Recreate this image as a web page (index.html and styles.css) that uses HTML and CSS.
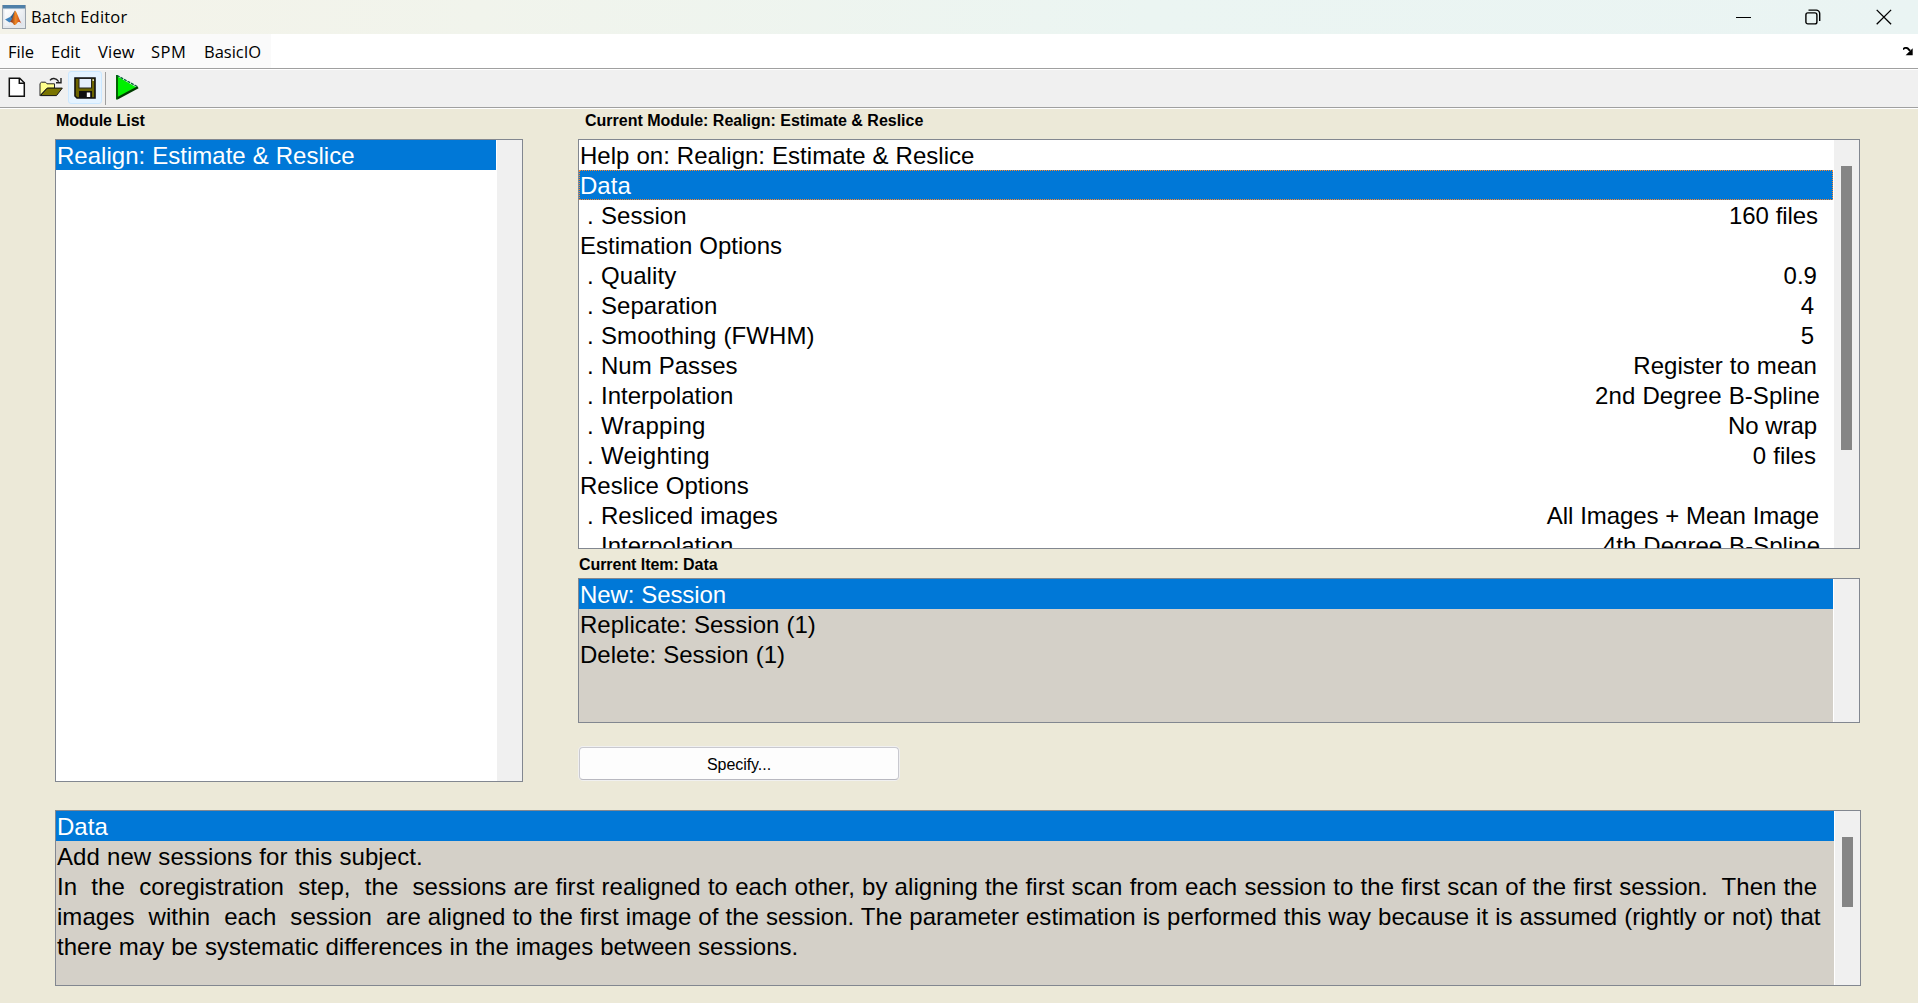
FILE: index.html
```html
<!DOCTYPE html>
<html lang="en">
<head>
<meta charset="utf-8">
<title>Batch Editor</title>
<link rel="stylesheet" href="styles.css">
</head>
<body>
<header class="titlebar">
  <svg class="app-icon" width="24" height="24" viewBox="0 0 24 24">
    <defs>
      <linearGradient id="peak" x1="0" y1="0" x2="1" y2="0"><stop offset="0" stop-color="#7a2418"/><stop offset=".5" stop-color="#f08a24"/><stop offset="1" stop-color="#b5301a"/></linearGradient>
      <linearGradient id="face" x1="0" y1="0" x2="1" y2="1"><stop offset="0" stop-color="#ffffff"/><stop offset="1" stop-color="#dde3ea"/></linearGradient>
    </defs>
    <rect x=".5" y=".5" width="23" height="23" fill="#e4e8ec" stroke="#9aa3ac"/>
    <rect x="1" y="0" width="22" height="3.5" fill="#4f80a8"/>
    <rect x="2.5" y="4.500" width="19" height="16.500" fill="url(#face)"/>
    <path d="M3 14.500l5-2.500 3 2.500-3.500 3z" fill="#3f83bd"/>
    <path d="M8 12c2-1 3.500-5 5-6.500L11.500 15l-.8-.3z" fill="#2d5f8c"/>
    <path d="M13 5.500c2 1.500 4 9 6.500 13-2-2-3.500-2-5 .5-1 1-2 1.200-2.500 1-1-2-2-3-4-3C10.500 15 11.500 9 13 5.500z" fill="url(#peak)"/>
  </svg>
  <h1 class="title">Batch Editor</h1>
  <div class="window-controls">
    <svg width="16" height="16" viewBox="0 0 16 16"><path d="M1 8.500h15" stroke="#000" stroke-width="1"/></svg>
    <svg width="16" height="16" viewBox="0 0 16 16" fill="none" stroke="#000" stroke-width="1.400"><rect x=".9" y="3.900" width="11" height="11" rx="2"/><path d="M3.500 1.100h7.700a3.500 3.500 0 0 1 3.500 3.500v7.400"/></svg>
    <svg width="16" height="16" viewBox="0 0 16 16"><path d="M.7 .9l14.400 14.400M15.100 .9L.7 15.300" stroke="#000" stroke-width="1.300"/></svg>
  </div>
</header>

<nav class="menubar">
  <ul class="menus">
    <li class="menu menu-file">File</li>
    <li class="menu menu-edit">Edit</li>
    <li class="menu menu-view">View</li>
    <li class="menu menu-spm">SPM</li>
    <li class="menu menu-io">BasicIO</li>
  </ul>
  <svg class="dock" width="10" height="9" viewBox="0 0 10 9"><path d="M0 2.500C1.500.2 4.500.2 6 2.800l1.200 1" fill="none" stroke="#000" stroke-width="1.900"/><path d="M9.700 1.200V8.300H2.600z" fill="#000"/></svg>
</nav>

<div class="toolbar">
  <svg class="tool-new" width="18" height="21" viewBox="0 0 18 21"><path d="M1.300 1.200h10.400l4.600 4.600v13.500h-15z" fill="#fff" stroke="#111" stroke-width="1.500"/><path d="M11.300 1v5.300h5" fill="none" stroke="#111" stroke-width="1.500"/></svg>
  <svg class="tool-open" width="25" height="21" viewBox="0 0 25 21"><path d="M1 18.500V6.500l1.500-1.300h4L8 6.800h7.500v4.500H8z" fill="#ffff8c" stroke="#222" stroke-width="1"/><path d="M1.500 18.600l6.800-7.500h15l-5.800 7.500z" fill="#7a7400" stroke="#111" stroke-width="1"/><path d="M11 3.300c1.800-2.600 6-2.600 8.700 1.300M22 1v4.800h-5" fill="none" stroke="#222" stroke-width="1.400"/></svg>
  <span class="tool-save">
    <svg width="22" height="22" viewBox="0 0 22 22"><path d="M1 1h20v20H3l-2-2z" fill="#6b6400" stroke="#111" stroke-width="1.600"/><rect x="5" y="1.500" width="12.500" height="9.500" fill="#e6effa" stroke="#222" stroke-width="1"/><rect x="5" y="14" width="13" height="7" fill="#111"/><rect x="12.800" y="15.500" width="3.400" height="4.500" fill="#fff"/><rect x="18.600" y="2.300" width="1.300" height="1.600" fill="#fff"/></svg>
  </span>
  <span class="separator"></span>
  <svg class="tool-run" width="23" height="25" viewBox="0 0 23 25"><path d="M1.500 1.500v22l20-10.500z" fill="#00f000"/><path d="M1 0v24.500" stroke="#006400" stroke-width="2"/><path d="M1 .5l20.500 11.200" stroke="#063" stroke-width="1.300" stroke-dasharray="3 1"/><path d="M1.500 23.300L22 12.300" stroke="#003c00" stroke-width="2.400"/></svg>
</div>

<main class="workspace">
  <section class="modules">
    <h2 class="label">Module List</h2>
    <div class="listbox">
      <ul class="rows">
        <li class="row selected">Realign: Estimate &amp; Reslice</li>
      </ul>
      <div class="scrollbar"></div>
    </div>
  </section>

  <section class="details">
    <h2 class="label label-module">Current Module: Realign: Estimate &amp; Reslice</h2>
    <div class="listbox module-box">
      <ul class="rows">
        <li class="row">Help on: Realign: Estimate &amp; Reslice</li>
        <li class="row selected focused">Data</li>
        <li class="row option"><span>Session</span><span class="value end-a tight">160 files</span></li>
        <li class="row">Estimation Options</li>
        <li class="row option"><span class="wide">Quality</span><span class="value end-b">0.9</span></li>
        <li class="row option"><span>Separation</span><span class="value end-c">4</span></li>
        <li class="row option"><span class="wide">Smoothing (FWHM)</span><span class="value end-c">5</span></li>
        <li class="row option"><span>Num Passes</span><span class="value end-b">Register to mean</span></li>
        <li class="row option"><span>Interpolation</span><span class="value end-d wide">2nd Degree B-Spline</span></li>
        <li class="row option"><span class="wider">Wrapping</span><span class="value end-b tight">No wrap</span></li>
        <li class="row option"><span class="wider">Weighting</span><span class="value end-f">0 files</span></li>
        <li class="row">Reslice Options</li>
        <li class="row option"><span>Resliced images</span><span class="value end-e tight">All Images + Mean Image</span></li>
        <li class="row option"><span>Interpolation</span><span class="value end-d">4th Degree B-Spline</span></li>
      </ul>
      <div class="scrollbar"><div class="thumb thumb-module"></div></div>
    </div>
    <h2 class="label label-item">Current Item: Data</h2>
    <div class="listbox gray item-box">
      <ul class="rows">
        <li class="row selected tight">New: Session</li>
        <li class="row">Replicate: Session (1)</li>
        <li class="row">Delete: Session (1)</li>
      </ul>
      <div class="scrollbar"></div>
    </div>
    <button class="specify" type="button">Specify...</button>
  </section>

  <section class="help">
    <div class="listbox gray">
      <ul class="rows">
        <li class="row selected">Data</li>
        <li class="row wide">Add new sessions for this subject.</li>
        <li class="row line-1">In  the  coregistration  step,  the  sessions are first realigned to each other, by aligning the first scan from each session to the first scan of the first session.  Then the</li>
        <li class="row line-2">images  within  each  session  are aligned to the first image of the session. The parameter estimation is performed this way because it is assumed (rightly or not) that</li>
        <li class="row line-3">there may be systematic differences in the images between sessions.</li>
      </ul>
      <div class="scrollbar"><div class="thumb thumb-help"></div></div>
    </div>
  </section>
</main>
</body>
</html>
```
FILE: styles.css
```css
* { box-sizing: border-box; }

body {
  margin: 0;
  height: 1003px;
  overflow: hidden;
  display: flex;
  flex-direction: column;
  background: #ece9d8;
  color: #000;
  font-family: "Liberation Sans", Arial, sans-serif;
}

ul { list-style: none; margin: 0; padding: 0; }
h1, h2 { margin: 0; }
svg { display: block; flex: none; }

/* Title bar */
.titlebar {
  height: 34px;
  flex: none;
  display: flex;
  align-items: center;
  padding: 0 26px 0 2px;
  background: linear-gradient(90deg, #f4f3e9 0%, #f1f4ec 25%, #ebf5f2 60%, #eaf4f3 100%);
}
.title {
  margin: 0 auto 0 5px;
  font: 400 16.5px/32px "Open Sans", "Segoe UI", sans-serif;
  letter-spacing: .2px;
}
.window-controls { display: flex; gap: 54px; padding-bottom: 1px; }
.window-controls svg:last-child { margin-left: 1px; }

/* Menu bar */
.menubar {
  height: 36px;
  flex: none;
  display: flex;
  justify-content: space-between;
  padding-right: 5px;
  background: #fff;
  border-bottom: 1px solid #fff;
  box-shadow: inset 0 -1px #a0a0a0;
}
.menus {
  display: flex;
  width: 271px;
  height: 34px;
  padding-left: 8px;
  background: #fafafa;
  font: 16.5px/35px "Open Sans", "Segoe UI", sans-serif;
}
.menu-file { width: 43px; }
.menu-edit { width: 47px; }
.menu-view { width: 53px; letter-spacing: .2px; }
.menu-spm { width: 53px; letter-spacing: .5px; }
.dock { margin-top: 13px; }

/* Toolbar */
.toolbar {
  height: 39px;
  flex: none;
  display: flex;
  align-items: flex-start;
  padding: 1px 0 0 8px;
  background: #f0f0f0;
  border-bottom: 1px solid #fff;
  box-shadow: inset 0 -1px #a0a0a0;
}
.tool-new { margin-top: 6px; }
.tool-open { margin: 6px 0 0 13px; }
.tool-save {
  width: 34px;
  height: 33px;
  margin-left: 4px;
  padding: 5px;
  border: 1px solid #cce8ff;
  border-radius: 3px;
  background: #e5f3ff;
}
.separator { width: 1px; height: 33px; margin: 1px 0 0 3px; background: #a0a0a0; }
.tool-run { margin: 4px 0 0 10px; }

/* Panels */
.workspace {
  flex: 1;
  display: grid;
  grid-template-columns: 468px 1282px;
  grid-template-rows: 673px 176px;
  column-gap: 55px;
  row-gap: 28px;
  padding-left: 55px;
}
.modules, .details { display: flex; flex-direction: column; }
.help { grid-column: 1 / -1; display: flex; width: 1806px; }

.label {
  height: 30px;
  flex: none;
  padding-left: 1px;
  font-size: 16px;
  font-weight: 700;
  line-height: 23px;
  white-space: nowrap;
}
.label-module { padding-left: 7px; letter-spacing: -.01px; }
.label-item { height: 29px; line-height: 31px; letter-spacing: -.06px; }

.listbox {
  flex: 1;
  display: flex;
  border: 1px solid #828790;
  background: #fff;
  overflow: hidden;
}
.module-box { flex: none; height: 410px; }
.item-box { flex: none; height: 145px; }

.rows { flex: 1; margin-right: 1px; overflow: hidden; }
.gray .rows { background: #d4d0c8; }
.row {
  height: 30px;
  padding-left: 1px;
  font-size: 24px;
  line-height: 31px;
  letter-spacing: .02px;
  word-spacing: .3px;
  white-space: pre;
}
.tight { letter-spacing: -.08px; }
.wide { letter-spacing: .08px; }
.wider { letter-spacing: .3px; }
.line-1 { word-spacing: .4px; letter-spacing: .055px; }
.line-2 { letter-spacing: .035px; }
.line-3 { letter-spacing: .02px; }

.selected { background: #0078d7; color: #fff; }
.focused { outline: 1px dotted #ff8728; outline-offset: -1px; }

.option { display: flex; padding-left: 8px; }
.option::before { content: "."; width: 14px; flex: none; }
.value { margin-left: auto; }
.end-a { margin-right: 15px; }
.end-b { margin-right: 16px; }
.end-c { margin-right: 19px; }
.end-d { margin-right: 13px; }
.end-e { margin-right: 14px; }
.end-f { margin-right: 17px; }

.scrollbar {
  width: 25px;
  flex: none;
  padding: 26px 0 0 7px;
  background: #f0f0f0;
}
.thumb { width: 11px; background: #858585; }
.thumb-module { height: 284px; }
.thumb-help { height: 70px; }

.specify {
  width: 320px;
  height: 33px;
  margin: 24px 0 0 1px;
  padding: 2px 0 0;
  border: 1px solid #c9c9cf;
  border-bottom-color: #b8b8c0;
  border-radius: 4px;
  background: #fdfdfd;
  box-shadow: 0 0 0 1px #f0f0f0;
  color: #000;
  font: 16px "Liberation Sans", Arial, sans-serif;
  letter-spacing: -.05px;
}
```
